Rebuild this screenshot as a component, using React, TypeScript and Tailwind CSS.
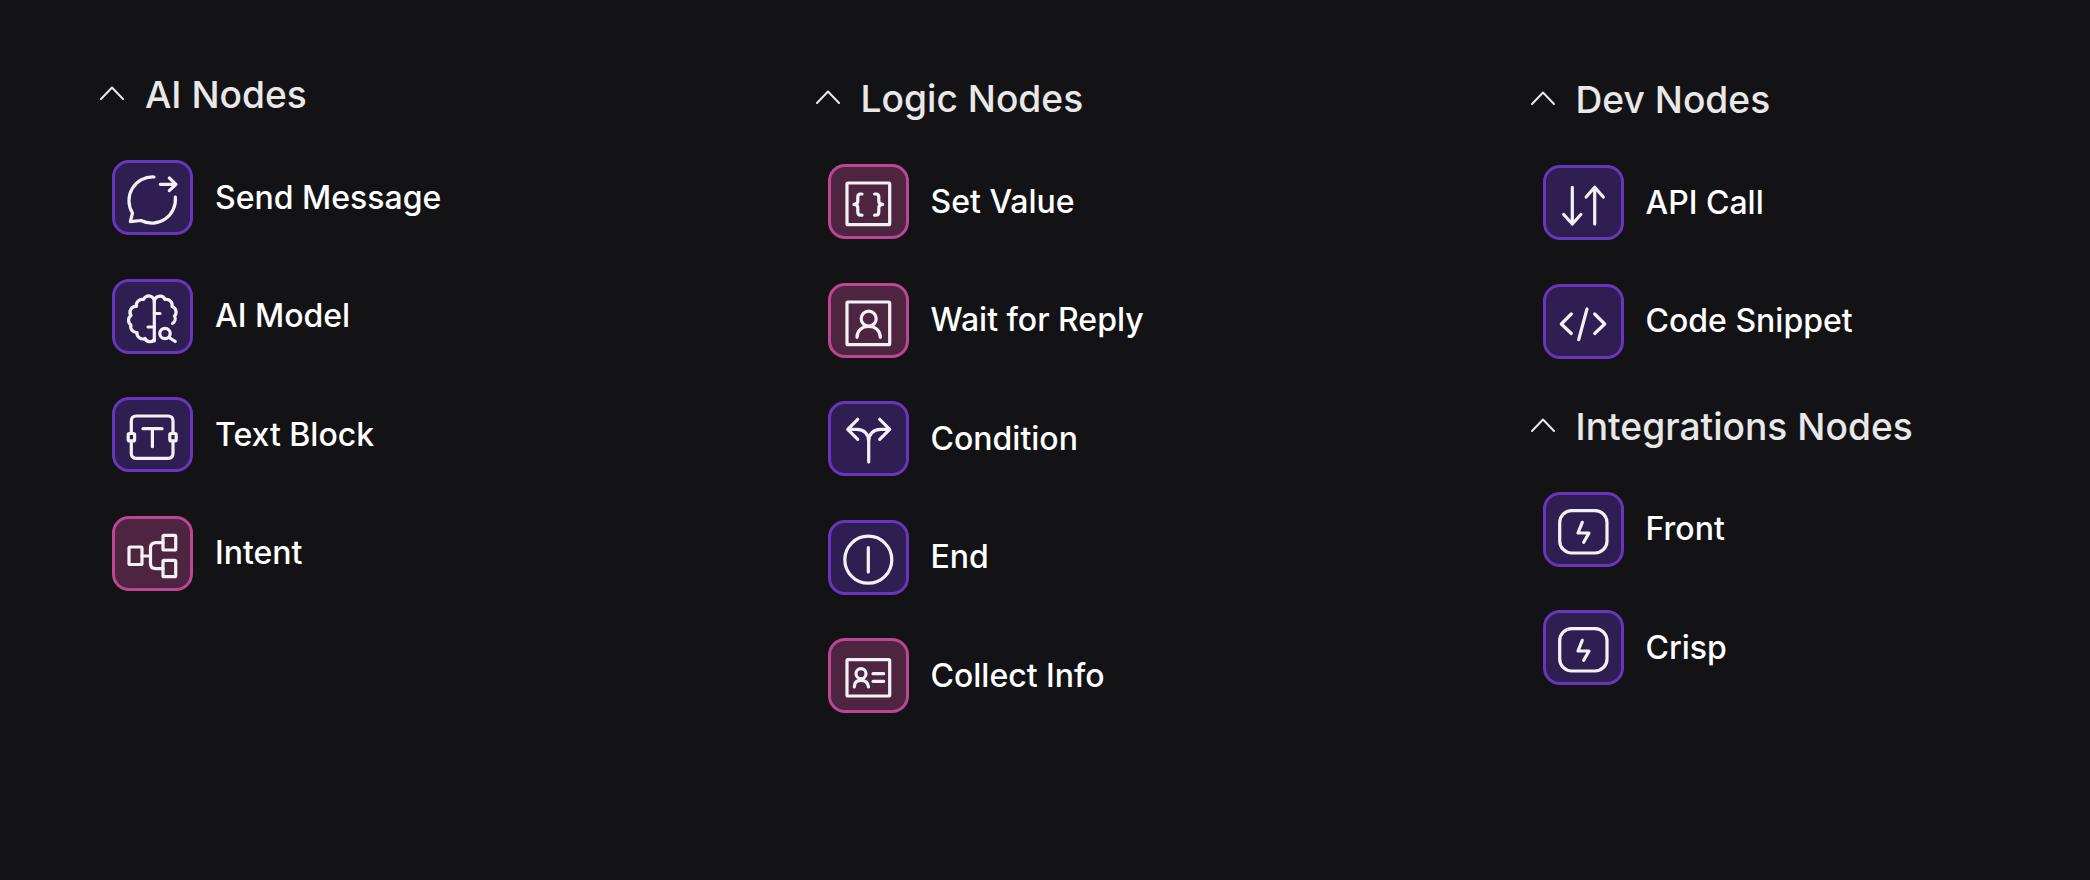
import type { ReactNode } from "react";

type Tone = "purple" | "pink";

interface NodeItem {
  label: string;
  tone: Tone;
  icon: ReactNode;
}

// all icons are drawn on the tile's own 81x75 grid
const icons = {
  send: (
    <>
      <path d="M42 17 A23.6 23.6 0 0 0 20.5 53 L18.3 61.7 L29 60.5 A23.6 23.6 0 0 0 63.3 37" />
      <path d="M48.3 24.3 H64 M57.3 18 L64 24.3 L57.3 30.6" />
    </>
  ),
  brain: (
    <>
      <path d="M42.3 23 V62" />
      <path d="M42.3 23 A5.6 5.6 0 0 0 31.5 20.5 A5.8 5.8 0 0 0 24.5 27.5 A5.8 5.8 0 0 0 19 36.5 A5.8 5.8 0 0 0 19 46 A5.8 5.8 0 0 0 25 53.5 A5.8 5.8 0 0 0 33 59.5 A5.4 5.4 0 0 0 42.3 60.5" />
      <path d="M42.3 23 A5.6 5.6 0 0 1 53 20.5 A5.8 5.8 0 0 1 60 27.5 A5.8 5.8 0 0 1 62.5 37 A5.6 5.6 0 0 1 60.5 44.5" />
      <path d="M42.3 34.5 H48 M42.3 48 H36" />
      <circle cx="53" cy="54.5" r="5.2" />
      <path d="M57 58.5 L63.3 62.5" />
    </>
  ),
  text: (
    <>
      <path d="M19.3 36.3 V24 Q19.3 19 24.3 19 H56 Q61 19 61 24 V36.3 M19.3 44 V56.3 Q19.3 61.3 24.3 61.3 H56 Q61 61.3 61 56.3 V44" />
      <rect x="16.2" y="36.5" width="6.4" height="7.4" rx="1.2" />
      <rect x="57.8" y="36.5" width="6.4" height="7.4" rx="1.2" />
      <path d="M31 31.7 H50 M40.4 31.7 V49.7" />
    </>
  ),
  intent: (
    <>
      <rect x="17" y="31" width="13" height="17.5" rx="1" />
      <rect x="51" y="19.3" width="12.7" height="14.7" rx="1" />
      <rect x="51" y="44.3" width="12.7" height="16.4" rx="1" />
      <path d="M30 40 H38.5 M51 26.7 H44 Q38.5 26.7 38.5 32 V47.5 Q38.5 52.7 44 52.7 H51" />
    </>
  ),
  setValue: (
    <>
      <rect x="19" y="19" width="42.7" height="41.7" rx="1" />
      <path d="M34 30 H32.5 Q29.8 30 29.8 33 V37 Q29.8 40.4 26 40.4 Q29.8 40.4 29.8 44 V48 Q29.8 51.2 32.5 51.2 H34" />
      <path d="M46.6 30 H48.1 Q50.8 30 50.8 33 V37 Q50.8 40.4 54.6 40.4 Q50.8 40.4 50.8 44 V48 Q50.8 51.2 48.1 51.2 H46.6" />
    </>
  ),
  wait: (
    <>
      <rect x="19" y="19" width="42.7" height="42.7" rx="1" />
      <circle cx="40.7" cy="35.7" r="7.5" />
      <path d="M29 54.3 C29 47.5 34 43.5 40.7 43.5 C47.4 43.5 52.3 47.5 52.3 54.3" />
    </>
  ),
  condition: (
    <path d="M29.7 18.3 L19.7 28.3 L29.7 38.3 M51.7 18.3 L61.7 28.3 L51.7 38.3 M19.7 28.3 H29 C36 28.3 40.7 33 40.7 40 V61 M61.7 28.3 H52.4 C45.4 28.3 40.7 33 40.7 40" />
  ),
  end: (
    <>
      <circle cx="40.3" cy="39.7" r="23.5" />
      <path d="M40.3 27.7 V52" />
    </>
  ),
  collect: (
    <>
      <rect x="19" y="21.7" width="42.7" height="36.3" rx="1" />
      <circle cx="33" cy="35.7" r="5" />
      <path d="M26.3 49 C26.3 44.5 29 42.3 33 42.3 C37 42.3 40 44.5 40.5 49" />
      <path d="M45 35.7 H55.7 M45 43.3 H55.7" />
    </>
  ),
  api: (
    <path d="M29.3 22.3 V59 M20.7 49.5 L29.3 59 L37.9 49.5 M51.7 59 V22.3 M43.1 32 L51.7 22.3 L60.3 32" />
  ),
  code: (
    <path d="M28.3 30 L18.3 40 L28.3 49.5 M51.7 30 L61.7 40 L51.7 49.5 M44 25 L35.7 55.7" />
  ),
  bolt: (
    <>
      <rect x="16.7" y="18.7" width="47.3" height="42.3" rx="12" />
      <path d="M39.3 30.3 L35 41 H46 L40.7 50.3" />
    </>
  ),
};

const aiNodes: NodeItem[] = [
  { label: "Send Message", tone: "purple", icon: icons.send },
  { label: "AI Model", tone: "purple", icon: icons.brain },
  { label: "Text Block", tone: "purple", icon: icons.text },
  { label: "Intent", tone: "pink", icon: icons.intent },
];

const logicNodes: NodeItem[] = [
  { label: "Set Value", tone: "pink", icon: icons.setValue },
  { label: "Wait for Reply", tone: "pink", icon: icons.wait },
  { label: "Condition", tone: "purple", icon: icons.condition },
  { label: "End", tone: "purple", icon: icons.end },
  { label: "Collect Info", tone: "pink", icon: icons.collect },
];

const devNodes: NodeItem[] = [
  { label: "API Call", tone: "purple", icon: icons.api },
  { label: "Code Snippet", tone: "purple", icon: icons.code },
];

const integrationNodes: NodeItem[] = [
  { label: "Front", tone: "purple", icon: icons.bolt },
  { label: "Crisp", tone: "purple", icon: icons.bolt },
];

function NodeRow({ item }: { item: NodeItem }) {
  return (
    <div className="flex items-center gap-[22px]">
      <div
        className={`h-[75px] w-[81px] shrink-0 rounded-[17px] border-[3px] ${
          item.tone === "pink"
            ? "border-[#bd4595] bg-[#4e2540]"
            : "border-[#6a35bd] bg-[#2f1e52]"
        }`}
      >
        <svg
          viewBox="0 0 81 75"
          fill="none"
          stroke="#f4f1f6"
          strokeWidth="3.2"
          strokeLinecap="round"
          strokeLinejoin="round"
          className="-m-[3px] block h-[75px] w-[81px]"
        >
          {item.icon}
        </svg>
      </div>
      <span className="text-[32px] leading-[40px] font-medium text-white">{item.label}</span>
    </div>
  );
}

function Section({ title, items }: { title: string; items: NodeItem[] }) {
  return (
    <section>
      <div className="flex h-[44px] items-center gap-[21px]">
        <svg
          viewBox="0 0 24 14"
          fill="none"
          stroke="#e8e8e8"
          strokeWidth="2"
          strokeLinecap="round"
          strokeLinejoin="round"
          className="h-[14px] w-[24px]"
        >
          <path d="M1 13 L12 1.5 L23 13" />
        </svg>
        <h2 className="mt-[4px] text-[37.2px] leading-[44px] font-[450] text-[#e8e8e8]">{title}</h2>
      </div>
      <div className="mt-[45px] ml-3 flex flex-col gap-[43.6px]">
        {items.map((item) => (
          <NodeRow key={item.label} item={item} />
        ))}
      </div>
    </section>
  );
}

export default function App() {
  return (
    <div className="grid h-[880px] w-[2090px] grid-cols-[715.5px_715px_1fr] bg-[#131315] pl-[100px] font-['Inter',sans-serif]">
      <div className="pt-[71px]">
        <Section title="AI Nodes" items={aiNodes} />
      </div>
      <div className="pt-[75px]">
        <Section title="Logic Nodes" items={logicNodes} />
      </div>
      <div className="flex flex-col gap-[44px] pt-[76px]">
        <Section title="Dev Nodes" items={devNodes} />
        <Section title="Integrations Nodes" items={integrationNodes} />
      </div>
    </div>
  );
}
